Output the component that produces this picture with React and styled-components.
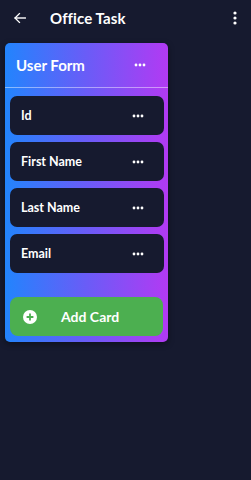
import React from "react";
import styled, { createGlobalStyle } from "styled-components";

const Global = createGlobalStyle`
  html, body { margin: 0; padding: 0; background: #161a2f; }
  body { font-family: Lato, "Noto Sans", sans-serif; color: #fff; }
  * { box-sizing: border-box; }
`;

const Page = styled.div`
  width: 251px;
  min-height: 480px;
  background: #161a2f;
`;

const TopBar = styled.header`
  height: 35px;
  display: flex;
  align-items: center;
  padding: 0 12px 0 12px;
`;

const IconBtn = styled.div`
  width: ${(p) => p.$w || 16}px;
  height: 16px;
  display: flex;
  align-items: center;
  justify-content: center;
`;

const Title = styled.h1`
  margin: 0 0 0 22px;
  font-size: 15px;
  font-weight: 700;
  flex: 1;
  letter-spacing: 0.1px;
`;

const Board = styled.div`
  padding: 8px 0 0 5px;
`;

const List = styled.section`
  width: 163px;
  border-radius: 5px;
  background: linear-gradient(90deg, #2284fd 0%, #6a5cf7 50%, #b23af3 100%);
  padding-bottom: 6px;
  box-shadow: 0 2px 6px rgba(0, 0, 0, 0.4);
`;

const ListHeader = styled.div`
  height: 45px;
  display: flex;
  align-items: center;
  justify-content: space-between;
  padding: 0 22px 0 11px;
  border-bottom: 1px solid rgba(255, 255, 255, 0.45);
`;

const ListTitle = styled.h2`
  margin: 0;
  font-size: 15px;
  font-weight: 700;
`;

const Items = styled.div`
  display: flex;
  flex-direction: column;
  gap: 7px;
  padding: 8px 4px 0 5px;
`;

const Item = styled.div`
  height: 39px;
  border-radius: 7px;
  background: #161a2f;
  display: flex;
  align-items: center;
  justify-content: space-between;
  padding: 0 20px 0 11px;
  font-size: 12.5px;
  font-weight: 700;
`;

const AddButton = styled.button`
  margin: 24px 5px 0 5px;
  width: 153px;
  height: 39px;
  border: none;
  border-radius: 8px;
  background: #4caf50;
  color: #fff;
  display: flex;
  align-items: center;
  padding: 0 0 0 13px;
  font-family: inherit;
  font-size: 14px;
  font-weight: 700;
  cursor: pointer;
`;

const AddLabel = styled.span`
  margin-left: 24px;
`;

const Dots = ({ color = "#fff" }) => (
  <svg width="12" height="4" viewBox="0 0 12 4">
    <circle cx="2" cy="2" r="1.4" fill={color} />
    <circle cx="6" cy="2" r="1.4" fill={color} />
    <circle cx="10" cy="2" r="1.4" fill={color} />
  </svg>
);

const Back = () => (
  <svg width="14" height="14" viewBox="0 0 24 24" fill="none" stroke="#fff" strokeWidth="2.4" strokeLinecap="square">
    <path d="M21 12H4" />
    <path d="M11 4.5L3.5 12L11 19.5" />
  </svg>
);

const Kebab = () => (
  <svg width="4" height="14" viewBox="0 0 4 14">
    <circle cx="2" cy="2" r="1.6" fill="#fff" />
    <circle cx="2" cy="7" r="1.6" fill="#fff" />
    <circle cx="2" cy="12" r="1.6" fill="#fff" />
  </svg>
);

const PlusCircle = () => (
  <svg width="14" height="14" viewBox="0 0 14 14">
    <circle cx="7" cy="7" r="7" fill="#fff" />
    <path d="M7 3.6V10.4M3.6 7H10.4" stroke="#4caf50" strokeWidth="1.8" />
  </svg>
);

const fields = ["Id", "First Name", "Last Name", "Email"];

export default function App() {
  return (
    <Page>
      <Global />
      <TopBar>
        <IconBtn><Back /></IconBtn>
        <Title>Office Task</Title>
        <IconBtn $w={8}><Kebab /></IconBtn>
      </TopBar>
      <Board>
        <List>
          <ListHeader>
            <ListTitle>User Form</ListTitle>
            <Dots />
          </ListHeader>
          <Items>
            {fields.map((f) => (
              <Item key={f}>
                <span>{f}</span>
                <Dots />
              </Item>
            ))}
          </Items>
          <AddButton>
            <PlusCircle />
            <AddLabel>Add Card</AddLabel>
          </AddButton>
        </List>
      </Board>
    </Page>
  );
}
